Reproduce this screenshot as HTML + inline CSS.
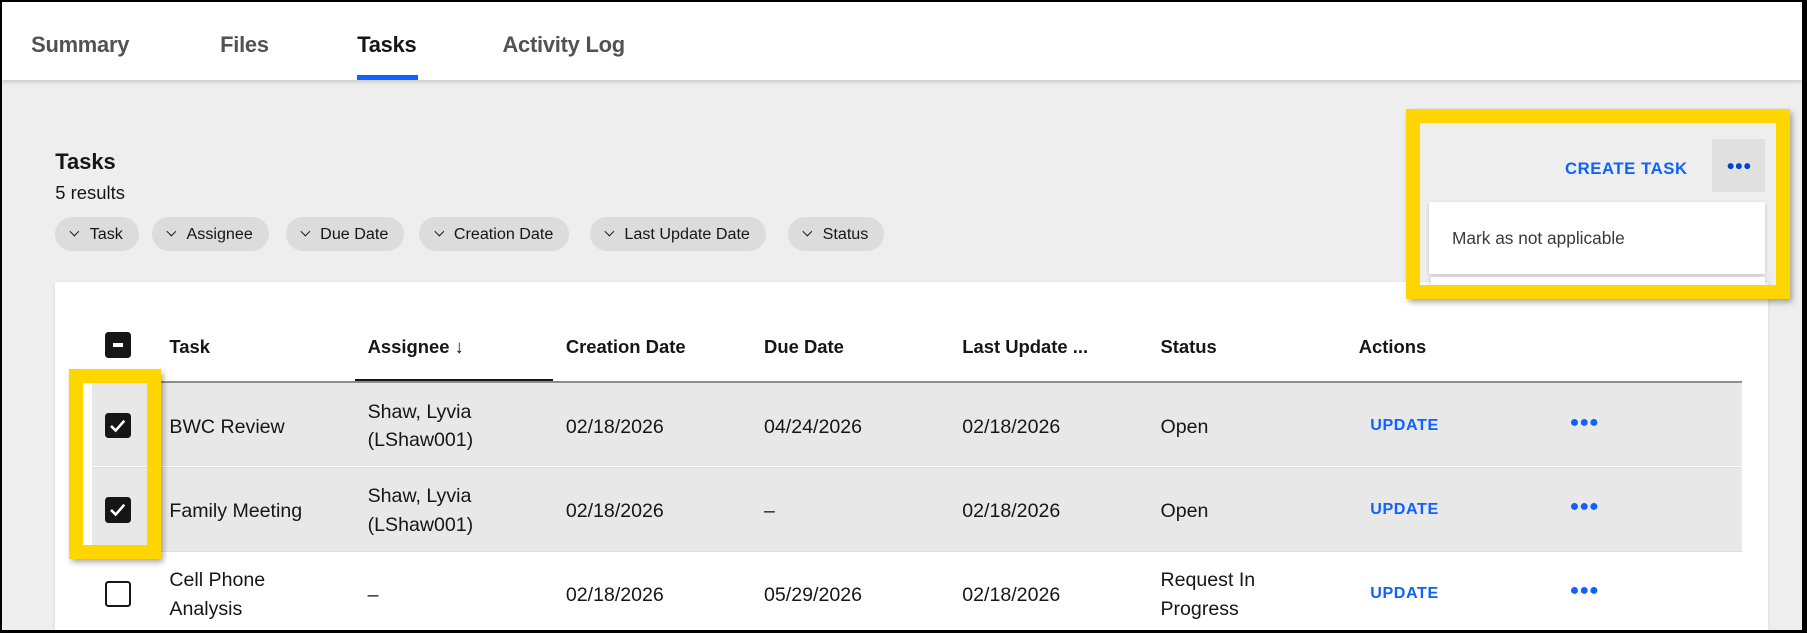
<!DOCTYPE html>
<html><head><meta charset="utf-8"><style>
html,body{margin:0;padding:0;width:1807px;height:633px;overflow:hidden;background:#000}
#w{zoom:1.15242;width:1568px;height:549px;position:relative;font-family:"Liberation Sans",sans-serif;color:#161616;overflow:hidden}
.a{position:absolute}
#page{left:2px;top:2px;width:1562px;height:545px;background:#eeeeee;overflow:hidden}
#tabs{left:0;top:0;width:1562px;height:67px;background:#fff;box-shadow:0 2px 3px rgba(0,0,0,.15)}
.tab{top:26px;font-size:19px;color:#525252;font-weight:bold;letter-spacing:-0.2px}
.chip{top:186px;height:30px;border-radius:15px;background:#dcdcdc;font-size:14px;line-height:30px;padding:0 14px 0 12px;white-space:nowrap;color:#161616}
.chip:before{content:"";display:inline-block;width:5px;height:5px;border-right:1.5px solid #161616;border-bottom:1.5px solid #161616;transform:rotate(45deg);margin:0 10px 3px 2px}
#card{left:46px;top:243px;width:1486px;height:310px;background:#fff;box-shadow:0 1px 3px rgba(0,0,0,.1)}
.th{top:290px;font-size:16px;font-weight:bold}
.row{left:78px;width:1432px;height:72px;border-top:1px solid #dcdcdc}
.td{font-size:17px;line-height:25px}
.cb{width:19px;height:19px;border:2px solid #161616;border-radius:3px;background:#161616}
.upd{font-size:14px;color:#0f62fe;font-weight:bold;letter-spacing:0.5px}
.dots{font-size:14px;color:#0f62fe;font-weight:bold}
.y{border:13px solid #ffd600;box-shadow:2px 3px 5px rgba(0,0,0,.35)}
</style></head><body><div id="w">
<div id="page" class="a">
<div id="tabs" class="a">
 <div class="a tab" style="left:25px">Summary</div>
 <div class="a tab" style="left:189px">Files</div>
 <div class="a tab" style="left:308px;color:#161616">Tasks</div>
 <div class="a" style="left:308px;top:63px;width:53px;height:4px;background:#0f62fe"></div>
 <div class="a tab" style="left:434px">Activity Log</div>
</div>
<div class="a" style="left:46px;top:127px;font-size:19px;font-weight:bold">Tasks</div>
<div class="a" style="left:46px;top:156px;font-size:16px">5 results</div>
<div class="a chip" style="left:46px">Task</div>
<div class="a chip" style="left:130px">Assignee</div>
<div class="a chip" style="left:246px">Due Date</div>
<div class="a chip" style="left:362px">Creation Date</div>
<div class="a chip" style="left:510px">Last Update Date</div>
<div class="a chip" style="left:682px">Status</div>

<div id="card" class="a"></div>
<div class="a cb" style="left:89px;top:286px"><div class="a" style="left:5px;top:8px;width:9px;height:3px;background:#fff"></div></div>
<div class="a th" style="left:145px">Task</div>
<div class="a th" style="left:317px">Assignee ↓</div>
<div class="a" style="left:306px;top:327px;width:172px;height:3px;background:#161616"></div>
<div class="a th" style="left:489px">Creation Date</div>
<div class="a th" style="left:661px">Due Date</div>
<div class="a th" style="left:833px">Last Update ...</div>
<div class="a th" style="left:1005px">Status</div>
<div class="a th" style="left:1177px">Actions</div>
<div class="a" style="left:78px;top:329px;width:1432px;height:1px;background:#8d8d8d"></div>

<div class="a row" style="top:330px;background:#e8e8e8;border-top:none"></div>
<div class="a row" style="top:403px;background:#e8e8e8"></div>
<div class="a row" style="top:476px;height:80px"></div>

<div class="a cb" style="left:89px;top:356px"><svg class="a" style="left:0;top:0" width="19" height="19"><path d="M3.5 9.5 L7.5 13.5 L15 5" stroke="#fff" stroke-width="2.2" fill="none"/></svg></div>
<div class="a td" style="left:145px;top:356px">BWC Review</div>
<div class="a td" style="left:317px;top:343px">Shaw, Lyvia<br>(LShaw001)</div>
<div class="a td" style="left:489px;top:356px">02/18/2026</div>
<div class="a td" style="left:661px;top:356px">04/24/2026</div>
<div class="a td" style="left:833px;top:356px">02/18/2026</div>
<div class="a td" style="left:1005px;top:356px">Open</div>
<div class="a upd" style="left:1187px;top:359px">UPDATE</div>
<div class="a dots" style="left:1360px;top:356px">●●●</div>

<div class="a cb" style="left:89px;top:429px"><svg class="a" style="left:0;top:0" width="19" height="19"><path d="M3.5 9.5 L7.5 13.5 L15 5" stroke="#fff" stroke-width="2.2" fill="none"/></svg></div>
<div class="a td" style="left:145px;top:429px">Family Meeting</div>
<div class="a td" style="left:317px;top:416px">Shaw, Lyvia<br>(LShaw001)</div>
<div class="a td" style="left:489px;top:429px">02/18/2026</div>
<div class="a td" style="left:661px;top:429px">–</div>
<div class="a td" style="left:833px;top:429px">02/18/2026</div>
<div class="a td" style="left:1005px;top:429px">Open</div>
<div class="a upd" style="left:1187px;top:432px">UPDATE</div>
<div class="a dots" style="left:1360px;top:429px">●●●</div>

<div class="a cb" style="left:89px;top:502px;background:#fff"></div>
<div class="a td" style="left:145px;top:489px">Cell Phone<br>Analysis</div>
<div class="a td" style="left:317px;top:502px">–</div>
<div class="a td" style="left:489px;top:502px">02/18/2026</div>
<div class="a td" style="left:661px;top:502px">05/29/2026</div>
<div class="a td" style="left:833px;top:502px">02/18/2026</div>
<div class="a td" style="left:1005px;top:489px">Request In<br>Progress</div>
<div class="a upd" style="left:1187px;top:505px">UPDATE</div>
<div class="a dots" style="left:1360px;top:502px">●●●</div>

<div class="a upd" style="left:1356px;top:136px;font-size:14.5px">CREATE TASK</div>
<div class="a" style="left:1484px;top:119px;width:46px;height:46px;background:#e0e0e0;text-align:center;line-height:46px;font-size:12px;color:#0043ce;letter-spacing:0px">●●●</div>
<div class="a" style="left:1240px;top:238px;width:290px;height:10px;background:#fff;box-shadow:0 2px 6px rgba(0,0,0,.25)"></div>
<div class="a" style="left:1238px;top:173px;width:292px;height:63px;background:#fff;box-shadow:0 1px 3px rgba(0,0,0,.2)"></div>
<div class="a" style="left:1258px;top:196px;font-size:15px;color:#393939">Mark as not applicable</div>

<div class="a y" style="left:1218px;top:93px;width:309px;height:140px"></div>
<div class="a y" style="left:58px;top:318px;width:55px;height:141px"></div>
</div>
</div></body></html>
